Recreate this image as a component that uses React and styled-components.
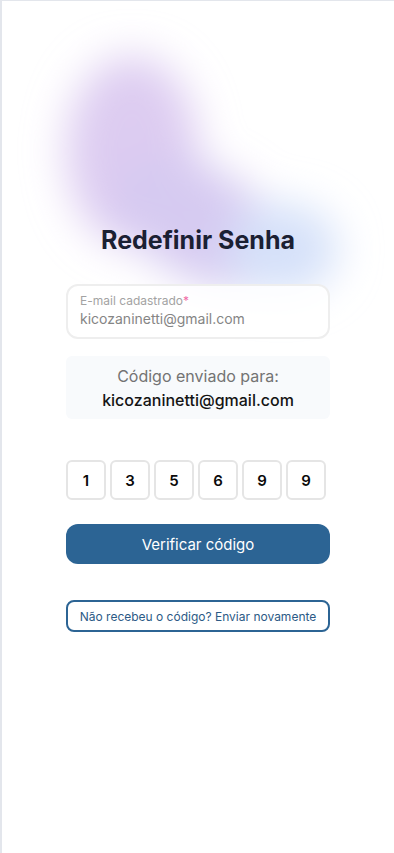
import React from "react";
import styled, { createGlobalStyle } from "styled-components";

const Global = createGlobalStyle`
  html, body { margin: 0; padding: 0; background: #ffffff; }
  body { font-family: Inter, "Noto Sans", sans-serif; }
  * { box-sizing: border-box; }
`;

const Page = styled.div`
  position: relative;
  min-height: 853px;
  border-top: 1px solid #e3e6ec;
  border-left: 2px solid #e3e6ec;
  overflow: hidden;
`;

const Blob = styled.svg`
  position: absolute;
  top: 0;
  left: -2px;
  width: 394px;
  height: 360px;
  pointer-events: none;
`;

const Column = styled.main`
  position: relative;
  width: 264px;
  margin: 0 auto;
  padding-top: 224px;
  display: flex;
  flex-direction: column;
`;

const Title = styled.h1`
  margin: 0;
  text-align: center;
  font-size: 25px;
  line-height: 30px;
  font-weight: 700;
  color: #1b2033;
`;

const Field = styled.div`
  margin-top: 29px;
  height: 55px;
  border: 2px solid #eeeeee;
  border-radius: 12px;
  background: rgba(255, 255, 255, 0.85);
  padding: 7px 12px 0 12px;
  display: flex;
  flex-direction: column;
`;

const Label = styled.span`
  font-size: 12px;
  line-height: 16px;
  color: #a3a3a3;
`;

const Star = styled.span`
  color: #f06aa6;
`;

const Value = styled.span`
  font-size: 14px;
  line-height: 20px;
  color: #858585;
`;

const Info = styled.div`
  margin-top: 17px;
  height: 63px;
  border-radius: 6px;
  background: #f8fafc;
  display: flex;
  flex-direction: column;
  align-items: center;
  justify-content: center;
`;

const InfoLine = styled.span`
  font-size: 16px;
  line-height: 24px;
  color: ${(p) => (p.strong ? "#141414" : "#737373")};
  font-weight: ${(p) => (p.strong ? 500 : 400)};
`;

const Digits = styled.div`
  margin-top: 41px;
  display: flex;
  gap: 4px;
`;

const Digit = styled.div`
  width: 40px;
  height: 40px;
  border: 2px solid #e5e5e5;
  border-radius: 6px;
  display: flex;
  align-items: center;
  justify-content: center;
  font-size: 15px;
  font-weight: 600;
  color: #0a0a0a;
`;

const Primary = styled.button`
  margin-top: 24px;
  height: 40px;
  border: none;
  border-radius: 12px;
  background: #2c6494;
  color: #ffffff;
  font-family: inherit;
  font-size: 15px;
  font-weight: 400;
`;

const Secondary = styled.button`
  margin-top: 36px;
  height: 32px;
  border: 2px solid #2c6494;
  border-radius: 8px;
  background: #ffffff;
  color: #2c5a86;
  font-family: inherit;
  font-size: 12px;
  font-weight: 400;
`;

export default function App() {
  return (
    <>
      <Global />
      <Page>
        <Blob viewBox="0 0 394 360">
          <defs>
            <filter id="b" x="-50%" y="-50%" width="200%" height="200%">
              <feGaussianBlur stdDeviation="21" />
            </filter>
          </defs>
          <g filter="url(#b)">
            <ellipse cx="132" cy="150" rx="66" ry="95" fill="#ddccf1" />
            <ellipse cx="200" cy="222" rx="95" ry="55" transform="rotate(30 200 222)" fill="#d6caf1" />
            <ellipse cx="282" cy="248" rx="56" ry="46" fill="#d5e1f9" />
          </g>
        </Blob>
        <Column>
          <Title>Redefinir Senha</Title>
          <Field>
            <Label>
              E-mail cadastrado<Star>*</Star>
            </Label>
            <Value>kicozaninetti@gmail.com</Value>
          </Field>
          <Info>
            <InfoLine>Código enviado para:</InfoLine>
            <InfoLine strong>kicozaninetti@gmail.com</InfoLine>
          </Info>
          <Digits>
            {["1", "3", "5", "6", "9", "9"].map((d, i) => (
              <Digit key={i}>{d}</Digit>
            ))}
          </Digits>
          <Primary>Verificar código</Primary>
          <Secondary>Não recebeu o código? Enviar novamente</Secondary>
        </Column>
      </Page>
    </>
  );
}
